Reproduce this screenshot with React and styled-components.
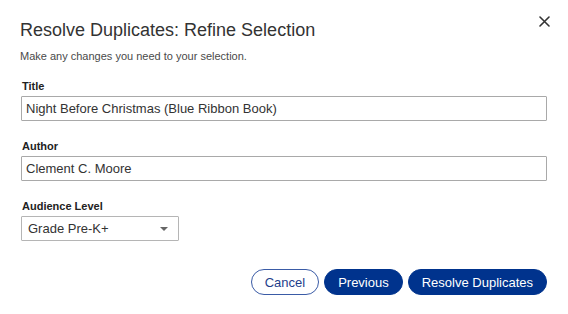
import { createGlobalStyle, styled } from "styled-components";

const Base = createGlobalStyle`
    html, body {
        margin: 0;
        padding: 0;
        background: #ffffff;
    }

    * {
        box-sizing: border-box;
    }
`

const Dialog = styled.section`
    position: relative;
    width: 568px;
    height: 314px;
    padding: 19px 21px 0 20px;
    background: #ffffff;
    border-radius: 4px;
    font-family: "Liberation Sans", Arial, sans-serif;
    color: #333333;
`

const Titulo = styled.h2`
    margin: 0;
    font-size: 18px;
    line-height: 22px;
    font-weight: normal;
    color: #333333;
`

const Fechar = styled.button`
    position: absolute;
    top: 13px;
    right: 16px;
    width: 16px;
    height: 16px;
    padding: 0;
    border: none;
    background: none;
    display: flex;
    align-items: center;
    justify-content: center;
    cursor: pointer;
`

const Subtitulo = styled.p`
    margin: 8px 0 17px 0;
    font-size: 11px;
    line-height: 14px;
    color: #4a4a4a;
`

const Campo = styled.div`
    display: flex;
    flex-direction: column;
    gap: 3px;
    margin-bottom: 19px;
    padding-left: 1px;
`

const Rotulo = styled.label`
    padding-left: 1px;
    font-size: 11px;
    line-height: 13px;
    font-weight: bold;
    color: #222222;
`

const Entrada = styled.input`
    width: 100%;
    height: 25px;
    padding: 0 4px;
    border: 1px solid #a9a9a9;
    border-radius: 1px;
    font-family: inherit;
    font-size: 13px;
    color: #333333;
    outline: none;
`

const Selecao = styled.div`
    width: 158px;
    height: 25px;
    padding: 0 6px;
    border: 1px solid #b5b5b5;
    border-radius: 1px;
    display: flex;
    align-items: center;
    justify-content: space-between;
    font-size: 13px;
    color: #333333;

    .seta {
        width: 0;
        height: 0;
        margin-right: 4px;
        border-left: 4px solid transparent;
        border-right: 4px solid transparent;
        border-top: 4px solid #666666;
    }
`

const Rodape = styled.div`
    display: flex;
    justify-content: flex-end;
    gap: 5px;
    margin-top: 28px;
    padding-right: 0;
`

const Botao = styled.button`
    height: 26px;
    padding: 0 13px;
    border-radius: 13px;
    border: 1px solid ${props => props.$contorno ? "#3a5ba6" : "#00338d"};
    background: ${props => props.$contorno ? "#ffffff" : "#00338d"};
    color: ${props => props.$contorno ? "#1f3f8c" : "#ffffff"};
    font-family: inherit;
    font-size: 13px;
    cursor: pointer;
`

function App() {
    return (
        <>
            <Base />
            <Dialog>
                <Titulo>Resolve Duplicates: Refine Selection</Titulo>
                <Fechar aria-label="Close">
                    <svg width="11" height="11" viewBox="0 0 11 11">
                        <path d="M1 1 L10 10 M10 1 L1 10" stroke="#333" strokeWidth="1.6" strokeLinecap="round" />
                    </svg>
                </Fechar>
                <Subtitulo>Make any changes you need to your selection.</Subtitulo>

                <Campo>
                    <Rotulo>Title</Rotulo>
                    <Entrada defaultValue="Night Before Christmas (Blue Ribbon Book)" />
                </Campo>
                <Campo>
                    <Rotulo>Author</Rotulo>
                    <Entrada defaultValue="Clement C. Moore" />
                </Campo>
                <Campo>
                    <Rotulo>Audience Level</Rotulo>
                    <Selecao>
                        <span>Grade Pre-K+</span>
                        <span className="seta" />
                    </Selecao>
                </Campo>

                <Rodape>
                    <Botao $contorno>Cancel</Botao>
                    <Botao>Previous</Botao>
                    <Botao>Resolve Duplicates</Botao>
                </Rodape>
            </Dialog>
        </>
    )
}

export default App;
